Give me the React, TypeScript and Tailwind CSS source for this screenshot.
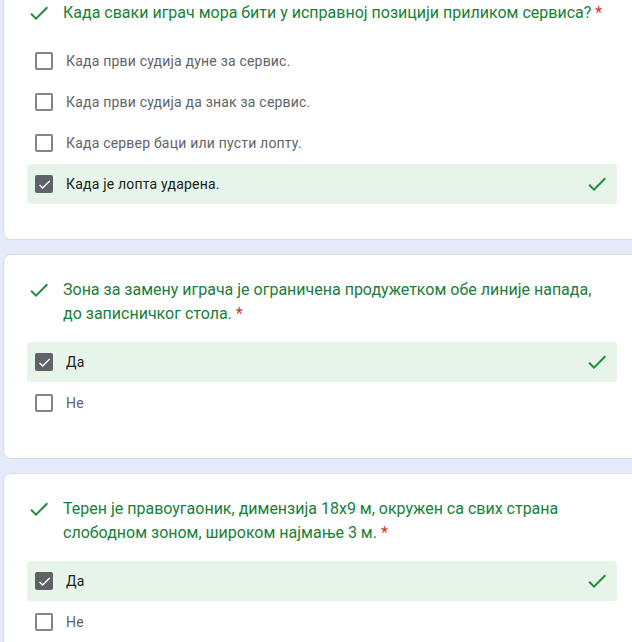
function CheckMark({ className }: { className: string }) {
  return (
    <svg viewBox="0 0 24 24" className={className} fill="currentColor">
      <path d="M9 16.17L4.83 12l-1.42 1.41L9 19 21 7l-1.41-1.41z" />
    </svg>
  );
}

type Option = { label: string; checked?: boolean };

function Row({ label, checked }: Option) {
  return (
    <div
      className={`flex h-10 items-center rounded pl-2 pr-2 ${
        checked ? "bg-[#e6f4ea]" : ""
      }`}
    >
      {checked ? (
        <div className="flex h-[18px] w-[18px] items-center justify-center rounded-[2px] bg-[#5f6368]">
          <CheckMark className="h-[15px] w-[15px] text-white" />
        </div>
      ) : (
        <div className="h-[18px] w-[18px] rounded-[2px] border-2 border-[#80868b]" />
      )}
      <span
        className={`ml-[13px] flex-1 text-[14px] tracking-[0.2px] ${
          checked ? "text-[#202124]" : "text-[#5f6368]"
        }`}
      >
        {label}
      </span>
      {checked && <CheckMark className="h-6 w-6 text-[#1e8e3e]" />}
    </div>
  );
}

function Card({
  question,
  options,
  className = "",
}: {
  question: string;
  options: Option[];
  className?: string;
}) {
  return (
    <div
      className={`ml-[3px] w-[638px] shrink-0 rounded-lg border border-[#dadce0] bg-white px-[23px] pb-[35px] pt-[23px] ${className}`}
    >
      <div className="flex items-start">
        <CheckMark className="h-6 w-6 shrink-0 text-[#1e8e3e]" />
        <p className="ml-3 flex-1 pr-2 text-[16px] leading-6 text-[#188038]">
          {question}
          <span className="ml-1 text-[#d93025]">*</span>
        </p>
      </div>
      <div className="mt-4 flex flex-col gap-[1px]">
        {options.map((o) => (
          <Row key={o.label} {...o} />
        ))}
      </div>
    </div>
  );
}

export default function App() {
  return (
    <div
      className="flex h-[642px] w-[632px] flex-col gap-[14px] overflow-hidden bg-[#e4ecfb]"
      style={{ fontFamily: "Roboto, 'Noto Sans', sans-serif" }}
    >
      <Card
        className="-mt-[23px]"
        question="Када сваки играч мора бити у исправној позицији приликом сервиса?"
        options={[
          { label: "Када први судија дуне за сервис." },
          { label: "Када први судија да знак за сервис." },
          { label: "Када сервер баци или пусти лопту." },
          { label: "Када је лопта ударена.", checked: true },
        ]}
      />
      <Card
        question="Зона за замену играча је ограничена продужетком обе линије напада, до записничког стола."
        options={[{ label: "Да", checked: true }, { label: "Не" }]}
      />
      <Card
        question="Терен је правоугаоник, димензија 18x9 м, окружен са свих страна слободном зоном, широком најмање 3 м."
        options={[{ label: "Да", checked: true }, { label: "Не" }]}
      />
    </div>
  );
}
